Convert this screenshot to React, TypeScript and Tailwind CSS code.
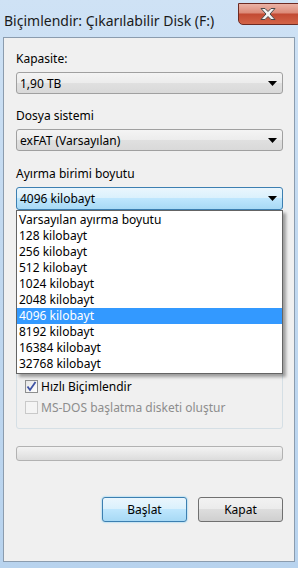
import React from "react";

const sizes = [
  "Varsayılan ayırma boyutu",
  "128 kilobayt",
  "256 kilobayt",
  "512 kilobayt",
  "1024 kilobayt",
  "2048 kilobayt",
  "4096 kilobayt",
  "8192 kilobayt",
  "16384 kilobayt",
  "32768 kilobayt",
];

const Arrow = () => (
  <svg width="9" height="5" viewBox="0 0 9 5" className="shrink-0">
    <path d="M0 0H9L4.5 5Z" fill="#000" />
  </svg>
);

const Combo = ({ value, active }: { value: string; active?: boolean }) => (
  <div
    className={
      active
        ? "h-[23px] flex items-center justify-between pl-[3px] pr-[5px] rounded-[3px] border border-[#3c7fb1] bg-[linear-gradient(#eaf6fd_0%,#d9f0fc_50%,#bee6fd_50%,#a7d9f5_100%)]"
        : "h-[22px] flex items-center justify-between pl-[3px] pr-[5px] rounded-[3px] border border-[#a0a0a0] bg-[linear-gradient(#f4f4f4_0%,#ececec_50%,#e0e0e0_50%,#d9d9d9_100%)]"
    }
  >
    <span>{value}</span>
    <Arrow />
  </div>
);

export default function App() {
  return (
    <div
      className="w-[298px] h-[568px] overflow-hidden relative bg-[linear-gradient(180deg,#cfe2f5_0%,#c2d9f0_40%,#b8d3ee_100%)] text-[12px] leading-[15px] text-black"
      style={{ fontFamily: '"Noto Sans", "Open Sans", sans-serif' }}
    >
      {/* title bar */}
      <div className="h-[37px] flex items-start justify-between">
        <div className="pl-[4px] pt-[12px] text-[14px] leading-[18px] text-[#1a1a1a] whitespace-nowrap">
          Biçimlendir: Çıkarılabilir Disk (F:)
        </div>
        <div className="shrink-0 mt-[3px] -mr-[4px] w-[64px] h-[22px] rounded-b-[5px] border border-[#6d2a22] bg-[linear-gradient(#eab3a6_0%,#dc8a78_45%,#c24a33_50%,#d36447_100%)] flex items-center justify-center pr-[4px]">
          <svg width="20" height="14" viewBox="0 0 20 14">
            <path
              d="M3 1.5L7 1.5L10 4.5L13 1.5L17 1.5L12 7L17 12.5L13 12.5L10 9.5L7 12.5L3 12.5L8 7Z"
              fill="#f4f4f4"
              stroke="#4a4a4a"
              strokeWidth="1"
              strokeLinejoin="round"
            />
          </svg>
        </div>
      </div>

      {/* client area */}
      <div className="ml-[3px] w-[292px] h-[525px] border border-[#8b9cae] bg-[#f0f0f0] pl-[12px] pr-[11px] flex flex-col">
        <div className="mt-[13px]">Kapasite:</div>
        <div className="mt-[6px]">
          <Combo value="1,90 TB" />
        </div>
        <div className="mt-[14px]">Dosya sistemi</div>
        <div className="mt-[6px]">
          <Combo value="exFAT (Varsayılan)" />
        </div>
        <div className="mt-[15px]">Ayırma birimi boyutu</div>
        <div className="mt-[6px] relative">
          <Combo value="4096 kilobayt" active />
          {/* open list */}
          <div className="absolute left-0 right-0 top-[23px] z-10 bg-white border border-[#646464] py-[1px] shadow-[3px_3px_3px_rgba(0,0,0,0.35)]">
            {sizes.map((s) => (
              <div
                key={s}
                className={
                  s === "4096 kilobayt"
                    ? "h-[16px] leading-[16px] pl-[2px] bg-[#3399ff] text-white"
                    : "h-[16px] leading-[16px] pl-[2px] text-black"
                }
              >
                {s}
              </div>
            ))}
          </div>
        </div>

        {/* options group */}
        <div className="mt-[10px] h-[209px] border border-[#d5dfe5] rounded-[3px] flex flex-col justify-end pl-[8px] pb-[13px] gap-[6px]">
          <div className="flex items-center gap-[3px]">
            <div className="w-[13px] h-[13px] border border-[#8e8f8f] bg-[linear-gradient(135deg,#e6e6e6,#ffffff)] flex items-center justify-center">
              <svg width="11" height="11" viewBox="0 0 11 11">
                <path d="M1.5 5.5L4 9L9.5 1" fill="none" stroke="#3f53a5" strokeWidth="1.8" />
              </svg>
            </div>
            <span>Hızlı Biçimlendir</span>
          </div>
          <div className="flex items-center gap-[3px] text-[#8d8d8d]">
            <div className="w-[13px] h-[13px] border border-[#c9c9c9] bg-[#f4f4f4]" />
            <span>MS-DOS başlatma disketi oluştur</span>
          </div>
        </div>

        {/* progress bar */}
        <div className="mt-[17px] h-[15px] rounded-[3px] border border-[#b2b2b2] bg-[linear-gradient(#f3f3f3_0%,#e8e8e8_50%,#dcdcdc_100%)]" />

        {/* buttons */}
        <div className="mt-[36px] flex justify-end gap-[11px]">
          <button className="w-[85px] h-[25px] rounded-[3px] border border-[#3c7fb1] bg-[linear-gradient(#eaf6fd_0%,#d9f0fc_50%,#bee6fd_50%,#a7d9f5_100%)] shadow-[0_0_2px_#5fc7f5]">
            Başlat
          </button>
          <button className="w-[85px] h-[25px] rounded-[3px] border border-[#707070] bg-[linear-gradient(#f2f2f2_0%,#ebebeb_50%,#dddddd_50%,#cfcfcf_100%)]">
            Kapat
          </button>
        </div>
      </div>
    </div>
  );
}
